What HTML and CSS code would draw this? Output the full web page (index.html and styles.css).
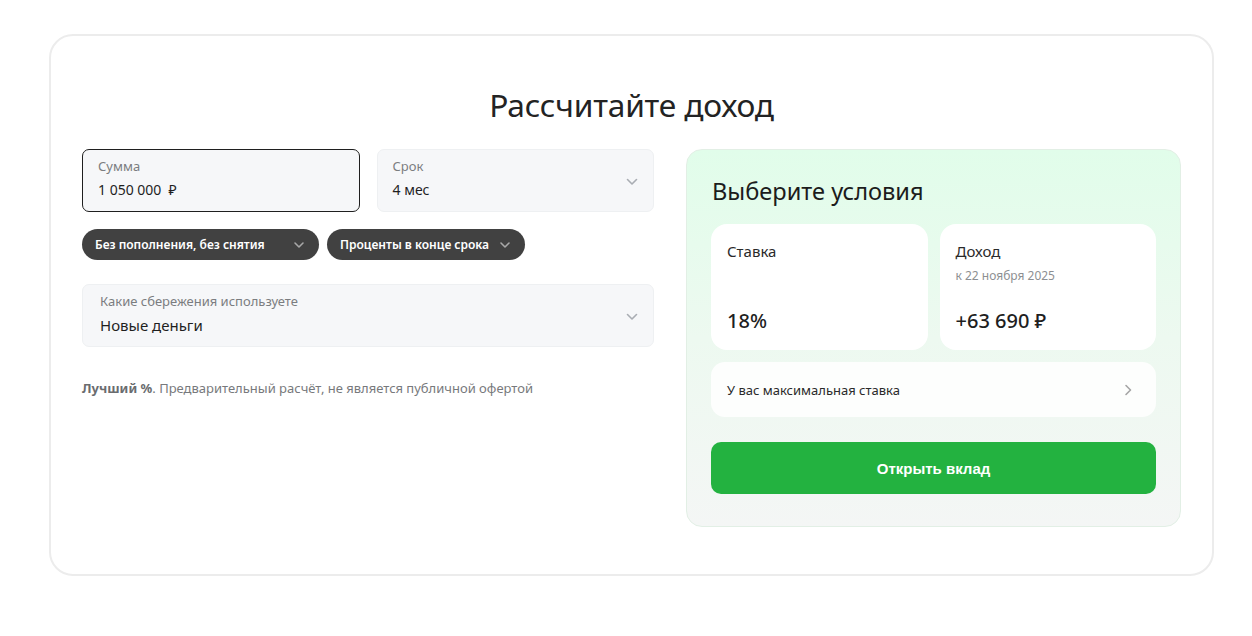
FILE: index.html
```html
<!DOCTYPE html>
<html lang="ru">
<head>
  <meta charset="UTF-8" />
  <meta name="viewport" content="width=device-width, initial-scale=1.0"/>
  <title>Рассчитайте доход</title>
  <link rel="stylesheet" href="styles.css">
</head>
<body>
  <div class="calc">
    <h1>Рассчитайте доход</h1>

    <div class="calc-body">
      <div class="form">
        <div class="row">
          <div class="field active">
            <span class="label">Сумма</span>
            <span class="value">1 050 000 &nbsp;₽</span>
          </div>
          <div class="field">
            <span class="label">Срок</span>
            <span class="value">4 мес</span>
            <svg class="chev" width="12" height="8" viewBox="0 0 12 8"><path d="M1.5 1.5 6 6l4.5-4.5" fill="none" stroke="#a9adb3" stroke-width="1.6" stroke-linecap="round" stroke-linejoin="round"/></svg>
          </div>
        </div>

        <div class="pills">
          <button class="pill pill-wide">Без пополнения, без снятия
            <svg width="12" height="8" viewBox="0 0 12 8"><path d="M2 2 6 6l4-4" fill="none" stroke="#a8a8a8" stroke-width="1.6" stroke-linecap="round" stroke-linejoin="round"/></svg>
          </button>
          <button class="pill">Проценты в конце срока
            <svg width="12" height="8" viewBox="0 0 12 8"><path d="M2 2 6 6l4-4" fill="none" stroke="#a8a8a8" stroke-width="1.6" stroke-linecap="round" stroke-linejoin="round"/></svg>
          </button>
        </div>

        <div class="field wide">
          <span class="label">Какие сбережения используете</span>
          <span class="value big">Новые деньги</span>
          <svg class="chev" width="12" height="8" viewBox="0 0 12 8"><path d="M1.5 1.5 6 6l4.5-4.5" fill="none" stroke="#a9adb3" stroke-width="1.6" stroke-linecap="round" stroke-linejoin="round"/></svg>
        </div>

        <p class="note"><b>Лучший %</b>. Предварительный расчёт, не является публичной офертой</p>
      </div>

      <div class="result">
        <h2>Выберите условия</h2>
        <div class="tiles">
          <div class="tile">
            <span class="tile-title">Ставка</span>
            <span class="tile-num">18%</span>
          </div>
          <div class="tile">
            <span class="tile-title">Доход</span>
            <span class="tile-sub">к 22 ноября 2025</span>
            <span class="tile-num">+63 690 ₽</span>
          </div>
        </div>
        <div class="info-row">
          <span>У вас максимальная ставка</span>
          <svg width="8" height="12" viewBox="0 0 8 12"><path d="M2 1.5 6.5 6 2 10.5" fill="none" stroke="#a5a5a5" stroke-width="1.6" stroke-linecap="round" stroke-linejoin="round"/></svg>
        </div>
        <button class="open-btn">Открыть вклад</button>
      </div>
    </div>
  </div>
</body>
</html>
```

FILE: styles.css
```css
* {
  box-sizing: border-box;
}

body {
  margin: 0;
  padding: 34px 38px 0 49px;
  font-family: "Noto Sans", "Open Sans", sans-serif;
  background: #fff;
  color: #1f1f1f;
}

.calc {
  width: 1165px;
  height: 542px;
  border: 2px solid #ececec;
  border-radius: 24px;
  padding: 47px 31px 0 31px;
}

h1 {
  margin: 0 0 22px;
  font-family: "Noto Sans", sans-serif;
  font-weight: 400;
  font-size: 31.7px;
  line-height: 44px;
  text-align: center;
  color: #232323;
  letter-spacing: -0.2px;
}

.calc-body {
  display: flex;
  gap: 32px;
  align-items: flex-start;
}

.form {
  width: 572px;
}

.row {
  display: flex;
  gap: 17px;
}

.field {
  position: relative;
  flex: 1;
  height: 63px;
  background: #f6f7f9;
  border: 1px solid #eef0f2;
  border-radius: 7px;
  padding: 8px 15px 0;
  display: flex;
  flex-direction: column;
}

.field.active {
  border-color: #1f1f1f;
}

.label {
  font-size: 13px;
  line-height: 17px;
  color: #7b7d80;
}

.value {
  margin-top: 5px;
  font-size: 14px;
  line-height: 20px;
  color: #1f1f1f;
}

.value.big {
  font-size: 15px;
}

.chev {
  position: absolute;
  right: 15px;
  top: 28px;
}

.pills {
  display: flex;
  gap: 8px;
  margin: 17px 0 24px;
}

.pill {
  height: 31px;
  border: none;
  border-radius: 16px;
  background: #414141;
  color: #fff;
  font-family: "Noto Sans", sans-serif;
  font-size: 12px;
  font-weight: 600;
  padding: 0 14px 0 13px;
  display: flex;
  align-items: center;
  justify-content: space-between;
  gap: 10px;
  cursor: pointer;
}

.pill-wide {
  width: 237px;
}

.field.wide {
  width: 100%;
  padding-left: 17px;
}

.note {
  margin: 32px 0 0;
  font-size: 13px;
  color: #77797c;
}

.note b {
  font-weight: 700;
  color: #6a6c6f;
}

.result {
  width: 495px;
  height: 378px;
  border: 1px solid #e2efe5;
  border-radius: 16px;
  background: linear-gradient(180deg, #e1fdea 0%, #edf9f0 50%, #f4f6f5 100%);
  padding: 25px 24px 0 25px;
}

h2 {
  margin: 0 0 16px;
  font-size: 23.6px;
  font-weight: 400;
  line-height: 33px;
  color: #1c1c1c;
}

.tiles {
  display: flex;
  gap: 12px;
  margin-left: -1px;
}

.tile {
  flex: 1;
  height: 126px;
  background: #fff;
  border-radius: 16px;
  padding: 16px 16px 0;
  display: flex;
  flex-direction: column;
}

.tile-title {
  font-size: 15px;
  line-height: 22px;
  color: #2a2a2a;
}

.tile-sub {
  margin-top: 5px;
  font-size: 12px;
  color: #8d8f92;
}

.tile-num {
  margin-top: auto;
  margin-bottom: 16px;
  font-size: 20px;
  font-weight: 500;
  color: #1f1f1f;
}

.info-row {
  margin: 12px 0 0 -1px;
  height: 55px;
  background: #fdfefd;
  border-radius: 14px;
  padding: 0 24px 0 16px;
  display: flex;
  align-items: center;
  justify-content: space-between;
  font-size: 13px;
  color: #2a2a2a;
}

.open-btn {
  margin: 25px 0 0 -1px;
  width: calc(100% + 1px);
  height: 52px;
  border: none;
  border-radius: 10px;
  background: #23b240;
  color: #fff;
  font-family: "Liberation Sans", Arial, sans-serif;
  font-weight: 700;
  font-size: 15px;
  cursor: pointer;
}
```
